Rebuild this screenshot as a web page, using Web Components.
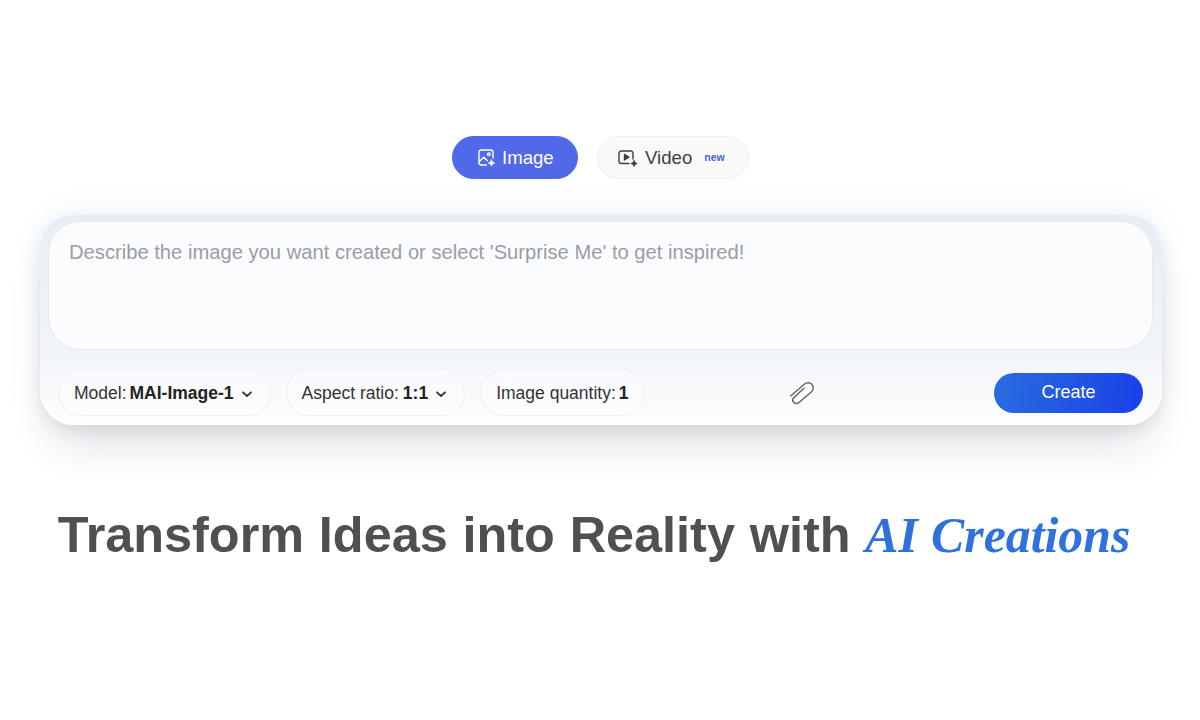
<!doctype html>
<html><head><meta charset="utf-8">
<style>
html,body{margin:0;padding:0;background:#fff;font-family:"Liberation Sans",Arial,sans-serif;}
body{width:1200px;height:720px;overflow:hidden;}
app-page{display:block;}
</style></head>
<body>
<app-page>
  <tab-switch slot="tabs"></tab-switch>
  <prompt-card slot="card"></prompt-card>
  <hero-title slot="title"></hero-title>
</app-page>
<script>
function def(name, html){
  customElements.define(name, class extends HTMLElement{
    constructor(){super();this.attachShadow({mode:'open'}).innerHTML=html;}
  });
}
def('app-page',`<style>
:host{display:flex;flex-direction:column;width:1200px;height:720px;padding-top:136px;box-sizing:border-box;align-items:stretch}
</style><slot name="tabs"></slot><slot name="card"></slot><slot name="title"></slot>`);

def('tab-pill',`<style>
:host{display:inline-flex;align-items:center;height:43px;border-radius:22px;box-sizing:border-box;font-size:18.600px;color:#3f3f3f;background:#f9f9fa;border:1px solid #f0f0f2;gap:5px}
:host([active]){background:#4f69e8;color:#fff;border-color:#4f69e8}
</style><slot></slot>`);

def('tab-switch',`<style>
:host{display:flex;justify-content:flex-start;gap:19px;padding-left:452px;height:43px}
tab-pill{width:126px;padding-left:24px}
tab-pill.v{width:152px;padding-left:20px;gap:6px}
svg{width:20px;height:20px;fill:none;stroke:currentColor;stroke-width:1.400;stroke-linecap:round;stroke-linejoin:round;flex:none}
.sp{fill:currentColor;stroke-width:.6}
.new{font-size:10.500px;font-weight:700;color:#4a63c9;margin-left:6px;position:relative;top:-1px}
.vt{margin-left:1px}
</style>
<tab-pill active>
<svg viewBox="0 0 20 20"><path d="M9.500 17H4.500A2.500 2.500 0 0 1 2 14.500V4.500A2.500 2.500 0 0 1 4.500 2H13.500A2.500 2.500 0 0 1 16 4.500V10"/><circle cx="11.800" cy="6.300" r="1.300"/><path d="M2.300 13.500L6.800 9.200L10.500 12.800"/><path class="sp" d="M14.500 11.800Q15 14.500 17.800 15Q15 15.500 14.500 18.200Q14 15.500 11.200 15Q14 14.500 14.500 11.800Z"/></svg>
<span>Image</span></tab-pill>
<tab-pill class="v">
<svg viewBox="0 0 20 20"><path d="M11 15.500H3.200A2.200 2.200 0 0 1 1 13.300V5.200A2.200 2.200 0 0 1 3.200 3H12.800A2.200 2.200 0 0 1 15 5.200V11"/><path d="M6.500 6.500L10.800 9.200L6.500 11.900Z" fill="currentColor"/><path class="sp" d="M16 12.300Q16.500 15 19.200 15.500Q16.500 16 16 18.700Q15.500 16 12.800 15.500Q15.500 15 16 12.300Z"/></svg>
<span class="vt">Video</span><span class="new">new</span></tab-pill>`);

def('tool-chip',`<style>
:host{display:inline-flex;align-items:center;height:47px;box-sizing:border-box;border:1px solid #eeeff3;border-radius:24px;font-size:17.500px;color:#333;padding:2px 15px 0;white-space:nowrap;background:rgba(255,255,255,.3)}
:host([more]){padding-right:17px}
::slotted(b){color:#222;margin-left:3px}
::slotted(svg){margin-left:7px;width:12px;height:12px;fill:none;stroke:#333;stroke-width:1.800;stroke-linecap:round;stroke-linejoin:round}
</style><slot></slot>`);

def('prompt-card',`<style>
:host{display:block;margin:36px 38px 0 40px;height:210px;box-sizing:border-box;border-radius:34px;padding:6px 9px 0 8px;
 background:linear-gradient(180deg,#e8eef6 0,#f0f4fa 62%,#f3f6fb 70%,#f9fafc 84%,#fdfdfd 100%);
 box-shadow:0 30px 40px -10px rgba(40,50,70,.13),0 6px 16px rgba(40,50,70,.08),0 -6px 30px rgba(190,205,235,.2)}
.box{height:129px;box-sizing:border-box;background:#fbfcfe;border:1px solid #e6e9ef;border-radius:32px;padding:19px 20px;font-size:20.200px;line-height:22px;color:#9a9da5}
.bar{display:flex;align-items:center;margin-top:19px;padding:0 10px}
.chips{display:flex;gap:15px}
.clip{margin-left:142px;width:28px;height:28px;fill:none;stroke:#666;stroke-width:1.500;stroke-linecap:round;stroke-linejoin:round;flex:none}
.create{margin-left:auto;width:149px;height:40px;border-radius:20px;display:flex;align-items:center;justify-content:center;color:#fff;font-size:18px;background:linear-gradient(100deg,#2a6de0 0,#1a3fe8 100%)}
</style>
<div class="box">Describe the image you want created or select 'Surprise Me' to get inspired!</div>
<div class="bar">
 <div class="chips">
  <tool-chip more><span>Model:</span><b>MAI-Image-1</b><svg viewBox="0 0 12 12"><path d="M2 4.300L6 8L10 4.300"/></svg></tool-chip>
  <tool-chip more><span>Aspect ratio:</span><b style="margin-left:4px">1:1</b><svg viewBox="0 0 12 12"><path d="M2 4.300L6 8L10 4.300"/></svg></tool-chip>
  <tool-chip><span>Image quantity:</span><b>1</b></tool-chip>
 </div>
 <svg class="clip" viewBox="0 0 28 28"><path d="M3.700 17L17 5.500C19.500 3.300 23 3.300 25 5.500C27 7.700 26.500 11 24.500 12.800L12 23.500C10.500 24.800 8 24.800 6.700 23.200C5.400 21.800 5.600 19.800 7 18.500L17 9.300"/></svg>
 <div class="create">Create</div>
</div>`);

def('hero-title',`<style>
:host{display:block;margin-top:76px;padding-right:12px;text-align:center;font-size:50.400px;line-height:68px;font-weight:700;color:#505050;white-space:nowrap;word-spacing:.8px}
i{font-family:"Liberation Serif","Times New Roman",serif;color:#2f72de;font-size:49.800px}
</style>Transform Ideas into Reality with <i>AI Creations</i>`);
</script>
</body></html>
